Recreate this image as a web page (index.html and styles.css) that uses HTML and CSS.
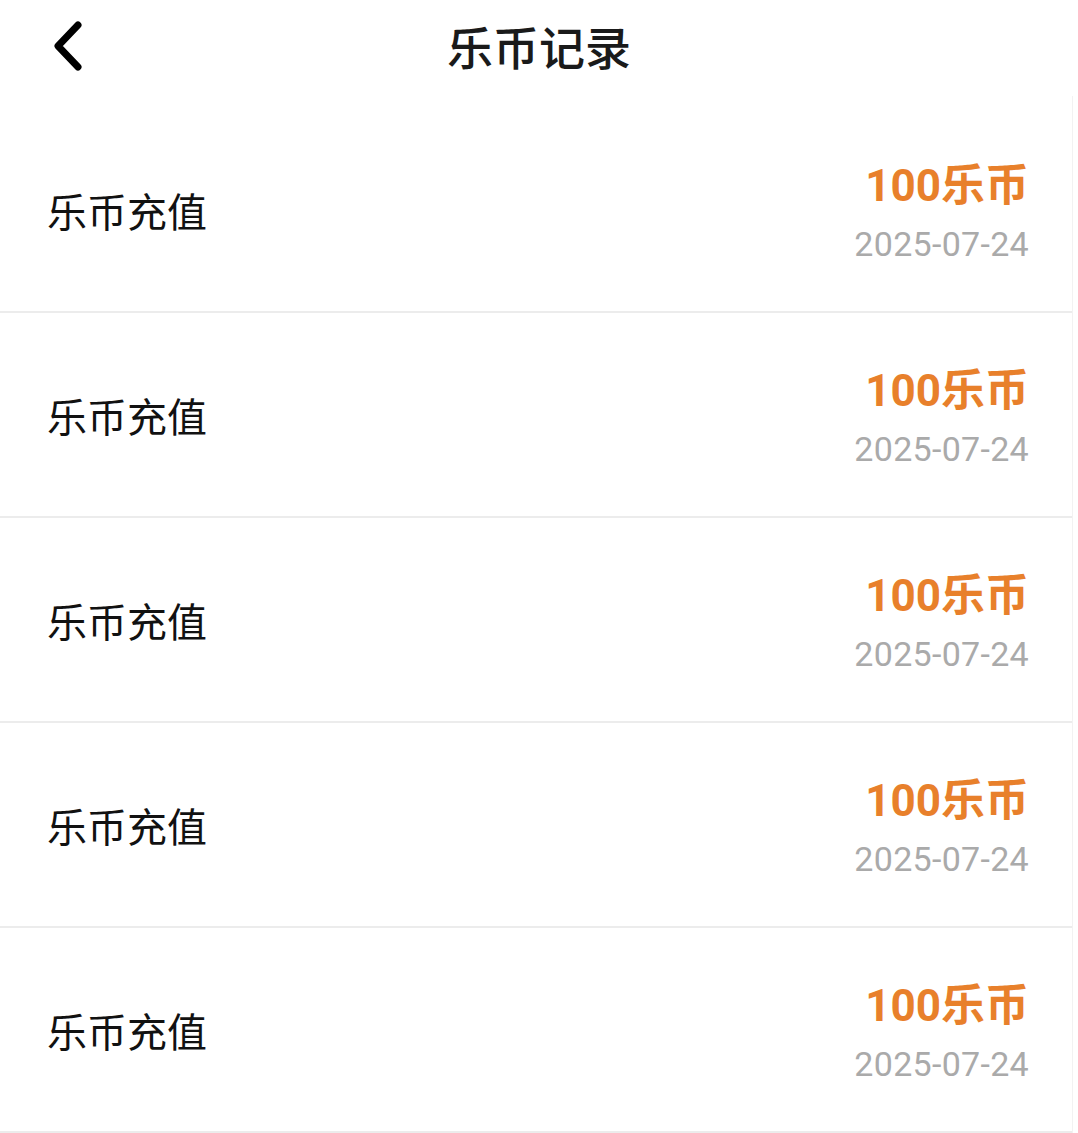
FILE: index.html
```html
<!DOCTYPE html>
<html lang="zh-CN">

<head>
    <meta charset="UTF-8">
    <meta name="viewport" content="width=device-width, initial-scale=1.0">
    <title>乐币记录</title>
    <link rel="stylesheet" href="styles.css">
</head>

<body>
    <div class="header">
        <a class="back" href="#">
            <svg width="40" height="56" viewBox="0 0 40 56">
                <path d="M31 7 L11 28 L31 49" fill="none" stroke="#000" stroke-width="7" stroke-linecap="round" stroke-linejoin="round"/>
            </svg>
        </a>
        <h1>乐币记录</h1>
    </div>

    <div class="record-list">
        <div class="record">
            <div class="record-name">乐币充值</div>
            <div class="record-info">
                <div class="amount">100乐币</div>
                <div class="date">2025-07-24</div>
            </div>
        </div>
        <div class="record">
            <div class="record-name">乐币充值</div>
            <div class="record-info">
                <div class="amount">100乐币</div>
                <div class="date">2025-07-24</div>
            </div>
        </div>
        <div class="record">
            <div class="record-name">乐币充值</div>
            <div class="record-info">
                <div class="amount">100乐币</div>
                <div class="date">2025-07-24</div>
            </div>
        </div>
        <div class="record">
            <div class="record-name">乐币充值</div>
            <div class="record-info">
                <div class="amount">100乐币</div>
                <div class="date">2025-07-24</div>
            </div>
        </div>
        <div class="record">
            <div class="record-name">乐币充值</div>
            <div class="record-info">
                <div class="amount">100乐币</div>
                <div class="date">2025-07-24</div>
            </div>
        </div>
    </div>
</body>
</html>
```

FILE: styles.css
```css
body {
    margin: 0;
    background-color: #fff;
    font-family: Roboto, "Noto Sans CJK SC", sans-serif;
    color: #111;
}

.header {
    position: relative;
    height: 90px;
    padding-bottom: 6px;
    display: flex;
    align-items: center;
    justify-content: center;
}

.back {
    position: absolute;
    left: 47px;
    top: 18px;
    display: block;
    line-height: 0;
}

.header h1 {
    margin: 0;
    font-family: "Noto Sans CJK SC", sans-serif;
    font-size: 46px;
    font-weight: 500;
    color: #1a1a1a;
}

.record-list {
    width: 1072px;
    border-right: 1px solid #f2f2f2;
    padding-top: 12px;
}

.record {
    height: 203px;
    display: flex;
    align-items: center;
    justify-content: space-between;
    padding: 0 43px 0 47px;
    border-bottom: 2px solid #ececec;
}

.record-name {
    font-family: "Noto Sans CJK SC", sans-serif;
    font-size: 40px;
    color: #111;
}

.record-info {
    text-align: right;
    padding-top: 10px;
}

.amount {
    font-size: 44px;
    font-weight: bold;
    line-height: 58px;
    color: #e8802b;
}

.date {
    font-size: 34px;
    line-height: 58px;
    color: #aaaaaa;
    letter-spacing: 0.3px;
}
```
